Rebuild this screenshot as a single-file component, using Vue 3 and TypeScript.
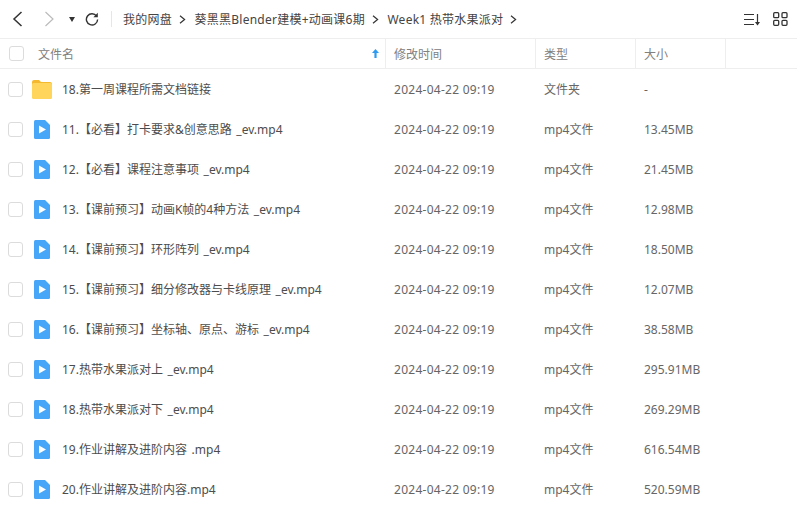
<template>
  <div class="page">
    <div class="toolbar">
      <div class="nav">
        <svg class="back" width="11" height="16" viewBox="0 0 11 16"><path d="M9.500 1 2 8l7.500 7" fill="none" stroke="#333" stroke-width="1.500" /></svg>
        <svg class="forward" width="11" height="16" viewBox="0 0 11 16"><path d="M1.500 1 9 8l-7.500 7" fill="none" stroke="#bbb" stroke-width="1.200" /></svg>
        <svg class="drop" width="6" height="5" viewBox="0 0 6 5"><path d="M0 0h6L3 5z" fill="#333" /></svg>
        <svg class="refresh" width="14" height="14" viewBox="0 0 14 14">
          <path d="M11.600 4.200A5.600 5.600 0 1 0 12.600 7.500" fill="none" stroke="#333" stroke-width="1.400" />
          <path d="M12.800 0.800v4.400H8.400z" fill="#333" />
        </svg>
      </div>
      <div class="crumbs">
        <template v-for="c in crumbs" :key="c">
          <span class="crumb">{{ c }}</span>
          <svg class="sep" width="7" height="9" viewBox="0 0 7 9"><path d="M1 .8 5.600 4.500 1 8.200" fill="none" stroke="#333" stroke-width="1.200" /></svg>
        </template>
      </div>
      <div class="tools">
        <svg width="17" height="13" viewBox="0 0 17 13">
          <path d="M0 1.500h10M0 6.500h10M0 11.500h10M13.500 1v10.500" fill="none" stroke="#333" stroke-width="1.200" />
          <path d="M11 9h5l-2.500 3.500z" fill="#333" />
        </svg>
        <svg width="15" height="14" viewBox="0 0 15 14" fill="none" stroke="#333" stroke-width="1.300">
          <rect x=".7" y=".7" width="5" height="5" rx="1" />
          <rect x="9" y=".7" width="5" height="5" rx="1" />
          <rect x=".7" y="8.300" width="5" height="5" rx="1" />
          <rect x="9" y="8.300" width="5" height="5" rx="1" />
        </svg>
      </div>
    </div>

    <div class="head">
      <div class="hname">
        <span class="check"></span>
        <span class="hlabel">文件名</span>
        <svg class="sort" width="7" height="9" viewBox="0 0 7 9"><path d="M3.500 0 7 4H4.600v5H2.400V4H0z" fill="#2f9bf0" /></svg>
      </div>
      <div class="hcell htime">修改时间</div>
      <div class="hcell htype">类型</div>
      <div class="hcell hsize">大小</div>
    </div>

    <div v-for="f in files" :key="f.name" class="row">
      <div class="cname">
        <span class="check"></span>
        <svg v-if="f.type === '文件夹'" class="ficon" width="22" height="19" viewBox="0 0 22 19">
          <path d="M0 2a2 2 0 0 1 2-2h5l2 2h9a2 2 0 0 1 2 2v2H0z" fill="#f5b92f" />
          <rect x="0" y="3" width="20" height="16" rx="1.500" fill="#ffd55c" />
        </svg>
        <svg v-else class="ficon" width="22" height="19" viewBox="0 0 22 19">
          <path d="M3.500 0h9.500l5 5v12.500a1.500 1.500 0 0 1-1.500 1.500h-13a1.500 1.500 0 0 1-1.500-1.500v-16a1.500 1.500 0 0 1 1.500-1.500z" fill="#47a6f7" />
          <path d="M7 5.500v8l7-4z" fill="#fff" />
        </svg>
        <span class="fname">{{ f.name }}</span>
      </div>
      <div class="ctime">2024-04-22 09:19</div>
      <div class="ctype">{{ f.type }}</div>
      <div class="csize">{{ f.size }}</div>
    </div>
  </div>
</template>

<script setup lang="ts">
const crumbs = ['我的网盘', '葵黑黑Blender建模+动画课6期', 'Week1 热带水果派对']

const files = [
  { name: '18.第一周课程所需文档链接', type: '文件夹', size: '-' },
  { name: '11.【必看】打卡要求&创意思路 _ev.mp4', type: 'mp4文件', size: '13.45MB' },
  { name: '12.【必看】课程注意事项 _ev.mp4', type: 'mp4文件', size: '21.45MB' },
  { name: '13.【课前预习】动画K帧的4种方法 _ev.mp4', type: 'mp4文件', size: '12.98MB' },
  { name: '14.【课前预习】环形阵列 _ev.mp4', type: 'mp4文件', size: '18.50MB' },
  { name: '15.【课前预习】细分修改器与卡线原理 _ev.mp4', type: 'mp4文件', size: '12.07MB' },
  { name: '16.【课前预习】坐标轴、原点、游标 _ev.mp4', type: 'mp4文件', size: '38.58MB' },
  { name: '17.热带水果派对上 _ev.mp4', type: 'mp4文件', size: '295.91MB' },
  { name: '18.热带水果派对下 _ev.mp4', type: 'mp4文件', size: '269.29MB' },
  { name: '19.作业讲解及进阶内容 .mp4', type: 'mp4文件', size: '616.54MB' },
  { name: '20.作业讲解及进阶内容.mp4', type: 'mp4文件', size: '520.59MB' },
]
</script>

<style>
html,
body {
  margin: 0;
  background: #fff;
  overflow: hidden;
}
</style>

<style scoped>
.page {
  width: 797px;
  height: 511px;
  overflow: hidden;
  font-family: "Noto Sans", "Noto Sans CJK SC", sans-serif;
  color: #4d4d4d;
  font-size: 12px;
}
.toolbar {
  height: 38px;
  display: flex;
  align-items: center;
  box-sizing: border-box;
}
.nav {
  display: flex;
  align-items: center;
  width: 112px;
  height: 16px;
  border-right: 1px solid #e6e6e6;
  box-sizing: border-box;
  padding-left: 12px;
}
.forward {
  margin-left: 21px;
}
.drop {
  margin-left: 14px;
}
.refresh {
  margin-left: 10px;
}
.crumbs {
  display: flex;
  align-items: center;
  margin-left: 11px;
  color: #444;
  letter-spacing: 0.25px;
}
.sep {
  margin: 0 8.500px 0 7px;
}
.tools {
  margin-left: auto;
  display: flex;
  align-items: center;
  gap: 12px;
  padding-right: 9px;
}
.head {
  height: 31px;
  display: flex;
  border-top: 1px solid #eee;
  border-bottom: 1px solid #eee;
  box-sizing: border-box;
  color: #808080;
}
.hname {
  width: 385px;
  display: flex;
  align-items: center;
  padding-left: 9px;
  padding-right: 6px;
  box-sizing: border-box;
}
.hlabel {
  margin-left: 14px;
}
.sort {
  margin-left: auto;
}
.hcell {
  display: flex;
  align-items: center;
  border-left: 1px solid #eee;
  box-sizing: border-box;
  padding-left: 8px;
}
.htime {
  width: 150px;
}
.htype {
  width: 100px;
}
.hsize {
  box-sizing: content-box;
  width: 81px;
  border-right: 1px solid #eee;
}
.row {
  height: 40px;
  display: flex;
  align-items: center;
}
.cname {
  width: 394px;
  display: flex;
  align-items: center;
  padding-left: 8px;
  box-sizing: border-box;
}
.check {
  width: 13px;
  height: 13px;
  border: 1px solid #dcdcdc;
  border-radius: 3px;
  flex: none;
  background: #fff;
}
.ficon {
  margin-left: 9px;
  flex: none;
}
.fname {
  margin-left: 8px;
  word-spacing: 1.500px;
}
.ctime {
  width: 150px;
  color: #666;
  letter-spacing: 0.27px;
}
.ctype {
  width: 100px;
  color: #666;
}
.csize {
  color: #666;
}
</style>
